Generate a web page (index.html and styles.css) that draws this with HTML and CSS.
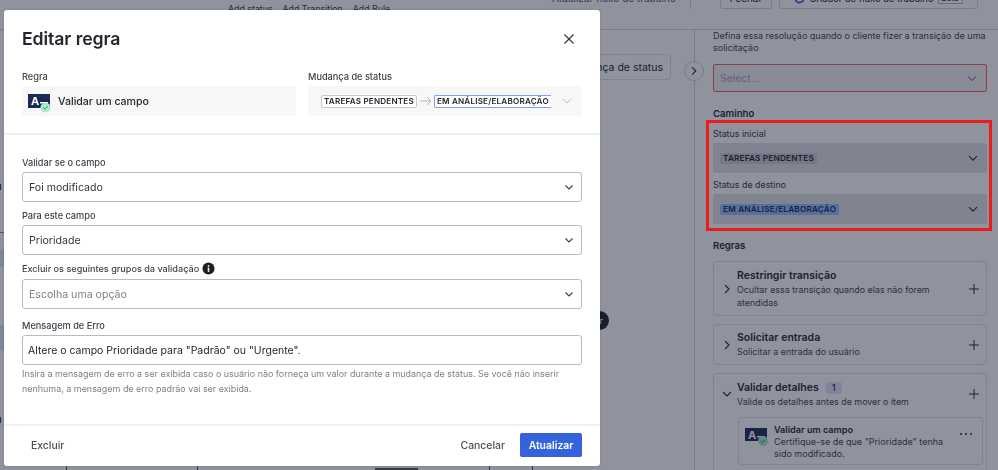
FILE: index.html
```html
<!DOCTYPE html>
<html lang="pt">
<head>
<meta charset="utf-8">
<title>Editar regra</title>
<link rel="stylesheet" href="styles.css">
</head>
<body>
<div class="page">
  <header class="topbar">
    <div class="add-links"><span>Add status</span><span>Add Transition</span><span>Add Rule</span></div>
    <div class="top-actions">
      <span class="top-update">Atualizar fluxo de trabalho</span>
      <span class="top-sep"></span>
      <span class="top-btn top-close">Fechar</span>
      <span class="top-btn top-builder">
        <svg viewBox="0 0 12 12" width="11" height="11"><circle cx="6" cy="6" r="4.5" fill="none" stroke="#2f5fd0" stroke-width="2"/></svg>
        Criador de fluxo de trabalho <span class="top-beta">Beta</span></span>
    </div>
  </header>
  <main class="workspace">
    <section class="canvas">
      <div class="node-change">Mudança de status</div>
      <div class="circle-toggle"><svg viewBox="0 0 20 20" width="18" height="18"><path d="M8 6l4 4-4 4" fill="none" stroke="#2a2d38" stroke-width="1.3"/></svg></div>
      <div class="dark-dot">r</div>
      <span class="edge edge-a">U</span><span class="edge edge-b">E</span><span class="edge edge-c">U</span>
      <span class="edge-line edge-line-a"></span>
      <span class="edge-fill edge-fill-a"></span><span class="edge-fill edge-fill-b"></span>
      <span class="tick tick-a"></span><span class="tick tick-b"></span><span class="tick tick-c"></span><span class="tick tick-d"></span><span class="tick-block"></span>
    </section>
    <aside class="side">
      <p class="side-help">Defina essa resolução quando o cliente fizer a transição de uma solicitação</p>
      <div class="side-select"><span>Select...</span>
        <svg class="chev" viewBox="0 0 12 12" width="12" height="12"><path d="M2 4.5l4 4 4-4" fill="none" stroke="#8d8f98" stroke-width="1.1"/></svg>
      </div>
      <h3 class="side-heading">Caminho</h3>
      <div class="side-label">Status inicial</div>
      <div class="status-box"><span class="status-tag">TAREFAS PENDENTES</span>
        <svg class="chev" viewBox="0 0 12 12" width="12" height="12"><path d="M2 4.2l4 4 4-4" fill="none" stroke="#25283a" stroke-width="1.1"/></svg>
      </div>
      <div class="side-label side-label-next">Status de destino</div>
      <div class="status-box"><span class="status-tag status-tag-blue">EM ANÁLISE/ELABORAÇÃO</span>
        <svg class="chev" viewBox="0 0 12 12" width="12" height="12"><path d="M2 4.2l4 4 4-4" fill="none" stroke="#25283a" stroke-width="1.1"/></svg>
      </div>
      <h3 class="side-heading side-heading-rules">Regras</h3>
      <div class="rule-card rule-card-tall">
        <svg class="rule-arrow" viewBox="0 0 12 12" width="12" height="12"><path d="M4 2l4 4-4 4" fill="none" stroke="#25283a" stroke-width="1.1"/></svg>
        <div class="rule-text"><div class="rule-title">Restringir transição</div><div class="rule-desc">Ocultar essa transição quando elas não forem atendidas</div></div>
        <svg class="rule-plus" viewBox="0 0 12 12" width="12" height="12"><path d="M6 1v10M1 6h10" fill="none" stroke="#25283a" stroke-width="1"/></svg>
      </div>
      <div class="rule-card">
        <svg class="rule-arrow" viewBox="0 0 12 12" width="12" height="12"><path d="M4 2l4 4-4 4" fill="none" stroke="#25283a" stroke-width="1.1"/></svg>
        <div class="rule-text"><div class="rule-title">Solicitar entrada</div><div class="rule-desc">Solicitar a entrada do usuário</div></div>
        <svg class="rule-plus" viewBox="0 0 12 12" width="12" height="12"><path d="M6 1v10M1 6h10" fill="none" stroke="#25283a" stroke-width="1"/></svg>
      </div>
      <div class="rule-card rule-card-open">
        <div class="rule-head">
          <svg class="rule-arrow" viewBox="0 0 12 12" width="12" height="12"><path d="M2 4l4 4 4-4" fill="none" stroke="#25283a" stroke-width="1.1"/></svg>
          <div class="rule-text"><div class="rule-title">Validar detalhes <span class="rule-count">1</span></div><div class="rule-desc">Valide os detalhes antes de mover o item</div></div>
          <svg class="rule-plus" viewBox="0 0 12 12" width="12" height="12"><path d="M6 1v10M1 6h10" fill="none" stroke="#25283a" stroke-width="1"/></svg>
        </div>
        <div class="rule-item">
          <svg class="rule-icon" viewBox="0 0 24 20" width="24" height="20"><rect x="0" y="2" width="22" height="13" fill="#1c2b55"/><rect x="12" y="10" width="8" height="1.5" fill="#fff"/><text x="3" y="12.5" class="icon-letter">A</text><circle cx="18" cy="15" r="5" fill="#a6eccb"/><path d="M15.7 15l1.7 1.7 2.9-3" fill="none" stroke="#2c9468" stroke-width="1"/></svg>
          <div class="rule-item-text"><div class="rule-item-title">Validar um campo</div><div class="rule-item-desc">Certifique-se de que "Prioridade" tenha sido modificado.</div></div>
          <span class="rule-dots"><i></i><i></i><i></i></span>
        </div>
      </div>
    </aside>
  </main>
</div>
<div class="backdrop"></div>
<div class="annotation"></div>
<div class="modal">
  <div class="modal-head">
    <h2 class="modal-title">Editar regra</h2>
    <svg class="modal-close" viewBox="0 0 12 12" width="12" height="12"><path d="M1.5 1.5l9 9M10.5 1.5l-9 9" fill="none" stroke="#33363f" stroke-width="1.2"/></svg>
  </div>
  <div class="summary">
    <div class="summary-col">
      <div class="label">Regra</div>
      <div class="summary-box">
        <svg class="summary-icon" viewBox="0 0 24 22" width="24" height="22"><rect x="0" y="2" width="22" height="14" fill="#1c2b55"/><rect x="12" y="10" width="8" height="1.5" fill="#fff"/><text x="3" y="12.5" class="icon-letter">A</text><circle cx="17.5" cy="15.5" r="5" fill="#a6eccb"/><path d="M15.2 15.5l1.7 1.7 2.9-3" fill="none" stroke="#2c9468" stroke-width="1"/></svg>
        <span class="summary-text">Validar um campo</span>
      </div>
    </div>
    <div class="summary-col">
      <div class="label">Mudança de status</div>
      <div class="summary-box summary-box-status">
        <span class="pill">TAREFAS PENDENTES</span>
        <svg class="flow-arrow" viewBox="0 0 12 10" width="12" height="10"><path d="M0 5h11M7 1l4 4-4 4" fill="none" stroke="#b5b7bd" stroke-width="1"/></svg>
        <span class="pill pill-blue">EM ANÁLISE/ELABORAÇÃO</span>
        <svg class="status-chev" viewBox="0 0 12 12" width="12" height="12"><path d="M2 4l4 4 4-4" fill="none" stroke="#bfc1c6" stroke-width="1"/></svg>
      </div>
    </div>
  </div>
  <div class="modal-body">
    <div class="field">
      <div class="label">Validar se o campo</div>
      <div class="control"><span>Foi modificado</span><svg viewBox="0 0 12 12" width="12" height="12"><path d="M2.5 4.5l3.5 3.5 3.5-3.5" fill="none" stroke="#3a3d47" stroke-width="1.1"/></svg></div>
    </div>
    <div class="field">
      <div class="label">Para este campo</div>
      <div class="control"><span>Prioridade</span><svg viewBox="0 0 12 12" width="12" height="12"><path d="M2.5 4.5l3.5 3.5 3.5-3.5" fill="none" stroke="#3a3d47" stroke-width="1.1"/></svg></div>
    </div>
    <div class="field field-wide">
      <div class="label label-info">Excluir os seguintes grupos da validação
        <svg viewBox="0 0 14 14" width="13" height="13"><circle cx="7" cy="7" r="6.5" fill="#1d1f27"/><rect x="6.2" y="6" width="1.6" height="4.6" fill="#fff"/><rect x="6.2" y="3.4" width="1.6" height="1.6" fill="#fff"/></svg>
      </div>
      <div class="control control-muted"><span>Escolha uma opção</span><svg viewBox="0 0 12 12" width="12" height="12"><path d="M2.5 4.5l3.5 3.5 3.5-3.5" fill="none" stroke="#3a3d47" stroke-width="1.1"/></svg></div>
    </div>
    <div class="field">
      <div class="label">Mensagem de Erro</div>
      <div class="control control-input"><span>Altere o campo Prioridade para "Padrão" ou "Urgente".</span></div>
      <p class="hint">Insira a mensagem de erro a ser exibida caso o usuário não forneça um valor durante a mudança de status. Se você não inserir nenhuma, a mensagem de erro padrão vai ser exibida.</p>
    </div>
  </div>
  <div class="modal-foot">
    <button class="btn btn-ghost btn-delete" type="button">Excluir</button>
    <div class="foot-right">
      <button class="btn btn-ghost" type="button">Cancelar</button>
      <button class="btn btn-primary" type="button">Atualizar</button>
    </div>
  </div>
</div>
</body>
</html>
```

FILE: styles.css
```css
* { box-sizing: border-box; }
html, body { margin: 0; padding: 0; height: 100%; overflow: hidden; }
body { font-family: Inter, "Liberation Sans", sans-serif; color: #23262f; background: #fff; }

.page { width: 998px; height: 470px; display: flex; flex-direction: column; overflow: hidden; }

.topbar { height: 30px; flex: none; border-bottom: 1px solid #d4d6da; position: relative; overflow: hidden; }
.add-links { display: flex; gap: 10px; position: absolute; left: 228px; top: 3px; font-size: 8.8px; color: #3a3d47; line-height: 12px; }
.top-actions { position: absolute; left: 552px; top: -13px; display: flex; align-items: center; height: 22px; font-size: 10px; color: #5a5d68; }
.top-update { width: 138px; white-space: nowrap; }
.top-sep { width: 1px; height: 22px; background: #d4d6da; margin-right: 29px; }
.top-btn { height: 22px; border: 1px solid #d4d6da; border-radius: 3px; display: flex; align-items: center; justify-content: center; white-space: nowrap; color: #23262f; }
.top-close { width: 52px; margin-right: 7px; }
.top-builder { width: 199px; gap: 4px; font-size: 9.4px; }
.top-beta { border: 1px solid #b5b7bd; padding: 0 3px; font-size: 8px; }

.workspace { flex: 1; display: flex; min-height: 0; }
.canvas { width: 695px; flex: none; position: relative; border-right: 1px solid #d4d6da; }

.node-change { position: absolute; right: 23px; top: 24px; width: 140px; height: 26px; border: 1px solid #dfe1e4; border-radius: 4px; font-size: 10.5px; line-height: 25px; text-align: right; padding-right: 7px; color: #23262f; background: #fff; }
.circle-toggle { position: absolute; left: 684px; top: 31px; width: 20px; height: 20px; border-radius: 50%; border: 1px solid #cfd1d6; background: #fff; display: flex; align-items: center; justify-content: center; }
.dark-dot { position: absolute; left: 590px; top: 281px; width: 19px; height: 19px; border-radius: 50%; background: #1d1f27; color: #fff; font-size: 9px; line-height: 19px; text-align: right; padding-right: 6px; }
.edge { position: absolute; left: -5px; font-size: 9px; font-weight: 600; line-height: 11px; width: 9px; color: #23262f; }
.edge-a { top: 152px; }
.edge-b { top: 226px; }
.edge-c { top: 385px; }
.edge-line { position: absolute; left: 0; width: 4px; height: 1px; background: #8b8d95; }
.edge-line-a { top: 202px; }
.edge-fill { position: absolute; left: 0; width: 4px; background: #dbe6fb; }
.edge-fill-a { top: 220px; height: 17px; }
.edge-fill-b { top: 295px; height: 25px; }
.tick { position: absolute; top: 434px; width: 1px; height: 6px; background: #55575f; }
.tick-a { left: 66px; }
.tick-b { left: 197px; }
.tick-c { left: 489px; }
.tick-d { left: 532px; }
.tick-block { position: absolute; left: 375px; top: 438px; width: 43px; height: 3px; background: #55575f; }

.side { width: 303px; flex: none; padding: 0 11px 0 18px; overflow: hidden; }
.side-help { margin: 0 0 10px; font-size: 9px; line-height: 12px; color: #3f424c; }
.side-select { height: 28px; border: 1px solid #f06068; border-radius: 2px; background: #f1f2f4; display: flex; align-items: center; justify-content: space-between; padding: 0 8px 0 6px; font-size: 10.4px; color: #a2a4ab; }
.side-heading { margin: 16px 0 0; font-size: 9.6px; line-height: 12px; font-weight: 600; color: #23262f; }
.side-heading-rules { margin-top: 16px; }
.side-label { margin-top: 8px; font-size: 8.9px; line-height: 12px; color: #33363f; }
.side-label-next { margin-top: 6px; }
.status-box { height: 30px; margin-top: 3px; background: #e1e2e6; border-radius: 3px; display: flex; align-items: center; justify-content: space-between; padding: 0 8px 0 7px; }
.status-tag { background: #cbcdd3; border-radius: 2px; font-size: 8.2px; font-weight: 600; line-height: 11px; padding: 0 3px; letter-spacing: .2px; color: #23262f; }
.status-tag-blue { background: #9abcff; color: #0d2a66; }
.chev { flex: none; }

.rule-card { position: relative; margin-top: 8px; border: 1px solid #dfe1e4; border-radius: 4px; display: flex; align-items: center; padding: 6px 6px 6px 7px; height: 41px; background: #fff; }
.side-heading-rules + .rule-card { margin-top: 9px; }
.rule-card-tall { height: 55px; }
.rule-card-open { display: block; height: 120px; padding: 0 3px 0 7px; }
.rule-head { display: flex; align-items: center; height: 40px; padding-right: 3px; }
.rule-arrow { flex: none; margin-right: 4px; }
.rule-text { flex: 1; min-width: 0; padding-right: 14px; }
.rule-title { font-size: 10.5px; line-height: 14px; font-weight: 600; color: #23262f; display: flex; align-items: center; gap: 7px; }
.rule-desc { font-size: 8.9px; line-height: 13px; color: #3f424c; }
.rule-plus { flex: none; }
.rule-count { background: #dce6fb; border-radius: 3px; font-size: 9.5px; font-weight: 500; width: 16px; height: 12px; line-height: 12px; text-align: center; color: #3a3d47; }
.rule-item { margin: 3px 0 0 17px; height: 48px; border: 1px solid #dfe1e4; border-radius: 3px; display: flex; padding: 5px 10px 0 6px; position: relative; }
.rule-icon { flex: none; margin: 3px 5px 0 0; }
.rule-item-text { flex: 1; }
.rule-item-title { font-size: 9.1px; line-height: 13px; font-weight: 600; color: #23262f; }
.rule-item-desc { font-size: 9px; line-height: 12px; color: #3f424c; }
.rule-dots { flex: none; display: flex; gap: 3px; margin-top: 10px; margin-left: 4px; }
.rule-dots i { width: 2px; height: 2px; background: #25283a; border-radius: 50%; display: block; }
.icon-letter { font-family: Inter, "Liberation Sans", sans-serif; font-size: 11px; font-weight: 700; fill: #fff; }

.backdrop { position: fixed; inset: 0; background: rgba(23, 28, 50, .48); }
.annotation { position: fixed; left: 706px; top: 120px; width: 286px; height: 111px; border: 3px solid #ea1c1c; }

.modal { position: fixed; left: 4px; top: 10px; width: 596px; height: 456px; background: #fff; border-radius: 3px; display: flex; flex-direction: column; box-shadow: 0 0 2px rgba(0, 0, 0, .2); }
.modal-head { height: 61px; flex: none; display: flex; align-items: center; justify-content: space-between; padding: 0 25px 3px 18px; }
.modal-title { margin: 0; font-size: 17.7px; line-height: 24px; font-weight: 600; color: #23262f; letter-spacing: -.1px; }
.modal-close { flex: none; }

.summary { height: 64px; flex: none; display: flex; gap: 12px; padding: 0 18px; border-bottom: 2px solid #eeeff1; }
.summary-col { flex: 1; min-width: 0; }
.label { font-size: 9.2px; line-height: 12px; font-weight: 500; color: #3f424c; }
.summary-box { margin-top: 3px; height: 30px; background: #f7f7f8; border-radius: 3px; display: flex; align-items: center; padding: 0 6px; }
.summary-icon { flex: none; margin: 3px 6px 0 0; }
.summary-text { font-size: 10.6px; font-weight: 500; color: #23262f; }
.summary-box-status { padding: 0 9px 0 13px; }
.pill { flex: none; border: 1px solid #c6c8cd; border-radius: 2px; background: #fff; font-size: 8.1px; font-weight: 600; line-height: 11px; padding: 0 2px; letter-spacing: .2px; color: #23262f; white-space: nowrap; }
.pill-blue { border-color: #7ba3f5; border-right: 0; border-radius: 2px 0 0 2px; width: 117px; overflow: hidden; margin-left: -1px; }
.flow-arrow { flex: none; margin: 0 3px; }
.status-chev { flex: none; margin-left: auto; }

.modal-body { flex: 1; padding: 22px 18px 0; display: flex; flex-direction: column; }
.field { margin-bottom: 8px; }
.field-wide { margin-bottom: 11px; }
.field .label { margin-bottom: 4px; line-height: 11px; }
.field .label-info { display: flex; align-items: center; gap: 3px; height: 11px; margin-bottom: 5px; font-size: 9.1px; }
.control { height: 30px; border: 1px solid #b9bbc1; border-radius: 3px; display: flex; align-items: center; justify-content: space-between; padding: 0 6px; font-size: 10.6px; color: #33363f; }
.control-muted { color: #7d7f88; }
.control-input { padding-left: 5px; font-size: 10.5px; color: #23262f; }
.hint { margin: 1px 0 0; font-size: 8.95px; line-height: 15px; color: #7d7f88; }

.modal-foot { height: 42px; flex: none; border-top: 2px solid #f1f1f3; display: flex; align-items: center; justify-content: space-between; padding: 0 18px 2px 18px; }
.foot-right { display: flex; align-items: center; gap: 6px; }
.btn { border: 0; background: none; font-family: inherit; font-size: 10.4px; font-weight: 500; height: 24px; border-radius: 2px; color: #4b4e59; padding: 0; }
.btn-ghost { padding: 0 9px; }
.btn-primary { background: #3563dc; color: #fff; width: 62px; font-weight: 600; }
```
